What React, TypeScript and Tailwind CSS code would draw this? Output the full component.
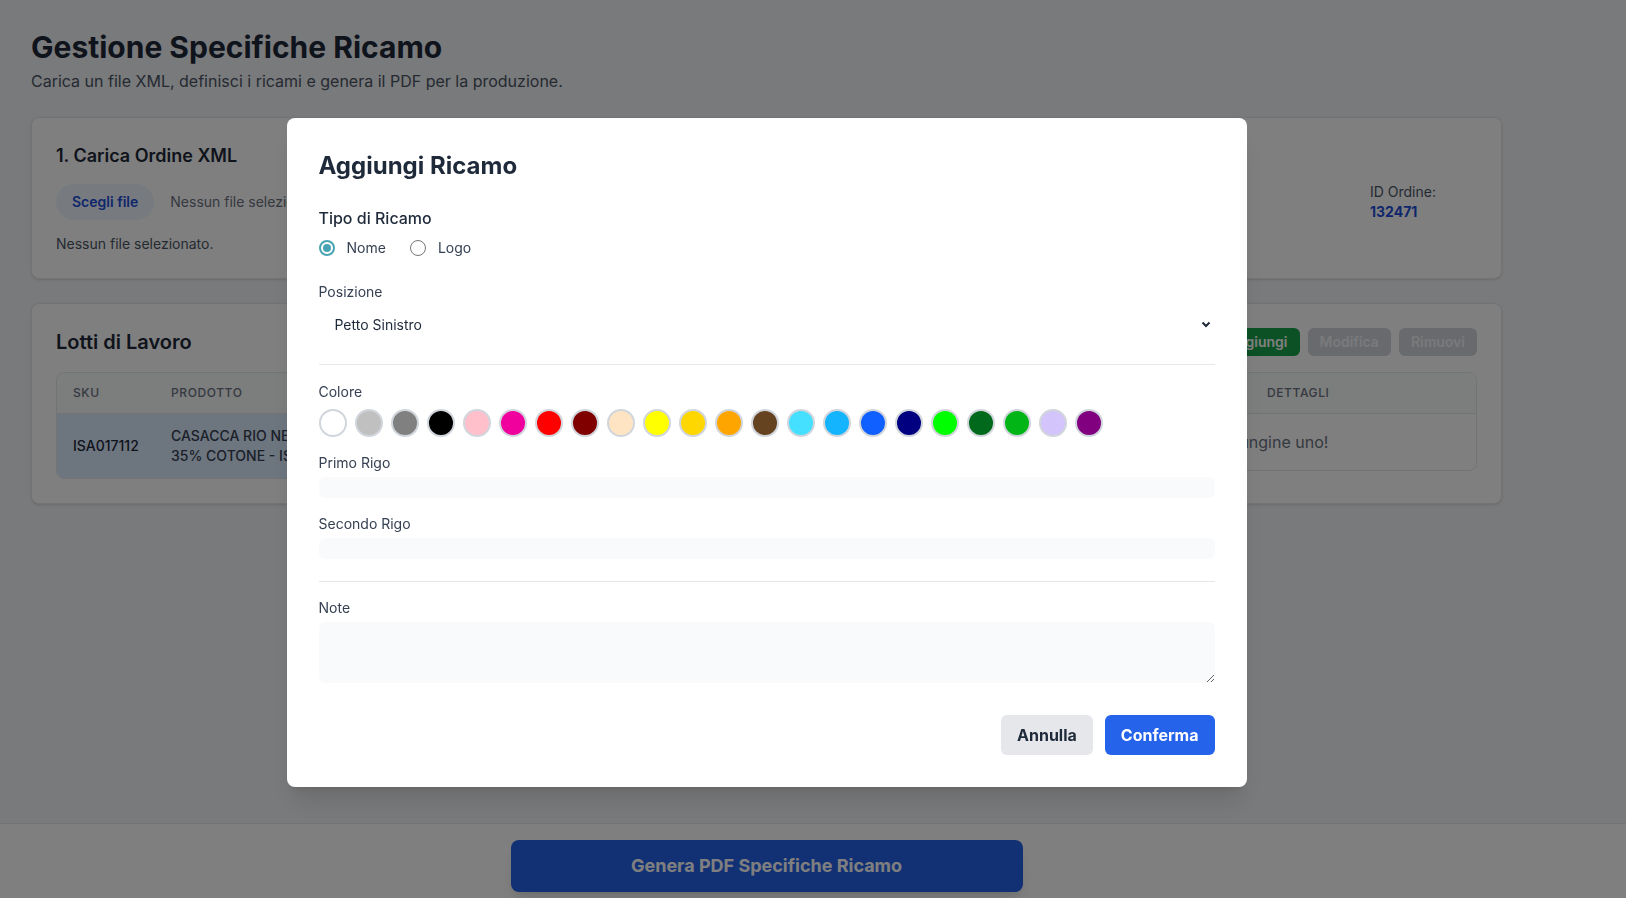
import React from "react";

const COLORS = [
  "#ffffff",
  "#c0c0c0",
  "#808080",
  "#000000",
  "#ffc0cb",
  "#f0009c",
  "#ff0000",
  "#800000",
  "#ffe4c4",
  "#ffff00",
  "#ffd700",
  "#ffa500",
  "#654321",
  "#45e0ff",
  "#14b4ff",
  "#1060ff",
  "#000080",
  "#00ff00",
  "#00691b",
  "#00b515",
  "#d4c4fc",
  "#800080",
];

function Radio({ label, checked }: { label: string; checked?: boolean }) {
  return (
    <label className="flex items-center">
      {checked ? (
        <span className="w-4 h-4 rounded-full border-2 border-[#4aa3b4] flex items-center justify-center">
          <span className="w-2 h-2 rounded-full bg-[#4aa3b4]" />
        </span>
      ) : (
        <span className="w-4 h-4 rounded-full border border-[#767676] bg-white" />
      )}
      <span className="ml-3 text-sm text-gray-700">{label}</span>
    </label>
  );
}

function AddEmbroideryModal() {
  return (
    <div className="fixed inset-0 bg-black/50 flex items-center pt-[6px]">
      <div className="w-[1533px] flex justify-center">
        <div className="w-[960px] bg-white rounded-lg shadow-xl p-8">
          <h2 className="text-2xl font-bold text-gray-800">Aggiungi Ricamo</h2>

          <div className="mt-6">
            <p className="text-base font-medium text-gray-800">Tipo di Ricamo</p>
            <div className="mt-2 flex items-center gap-6 h-5">
              <Radio label="Nome" checked />
              <Radio label="Logo" />
            </div>
          </div>

          <div className="mt-6">
            <p className="text-sm text-gray-700">Posizione</p>
            <div className="mt-1 h-[38px] pl-4 pr-1 flex items-center justify-between bg-white text-sm text-gray-800">
              <span>Petto Sinistro</span>
              <svg width="10" height="7" viewBox="0 0 10 7" fill="none">
                <path d="M1.5 1.5L5 5l3.5-3.5" stroke="#1f2937" strokeWidth="2" />
              </svg>
            </div>
          </div>

          <div className="mt-5 border-t border-gray-200 pt-[17px]">
            <p className="text-sm text-gray-700">Colore</p>
            <div className="mt-[7px] flex gap-2">
              {COLORS.map((c) => (
                <span
                  key={c}
                  className="w-7 h-7 rounded-full border-2 border-gray-300"
                  style={{ backgroundColor: c }}
                />
              ))}
            </div>

            <p className="mt-4 text-sm text-gray-700">Primo Rigo</p>
            <input className="mt-1 block w-full h-[21px] rounded-md bg-gray-50 outline-none" />

            <p className="mt-4 text-sm text-gray-700">Secondo Rigo</p>
            <input className="mt-1 block w-full h-[21px] rounded-md bg-gray-50 outline-none" />
          </div>

          <div className="mt-[22px] border-t border-gray-200 pt-4">
            <p className="text-sm text-gray-700">Note</p>
            <textarea className="mt-1 block w-full h-[61px] rounded-md bg-gray-50 outline-none" />
          </div>

          <div className="mt-8 flex justify-end gap-3">
            <button className="h-10 px-4 rounded-md bg-gray-200 text-gray-800 font-bold">
              Annulla
            </button>
            <button className="h-10 px-4 rounded-md bg-[#2563eb] text-white font-bold">
              Conferma
            </button>
          </div>
        </div>
      </div>
    </div>
  );
}

export default function App() {
  return (
    <div className="h-screen overflow-hidden flex flex-col bg-gray-100 font-[Inter,sans-serif]">
      <main className="flex-1 w-[1533px] px-[31px] pt-[29px]">
        <h1 className="text-3xl font-bold text-gray-800">Gestione Specifiche Ricamo</h1>
        <p className="mt-1 text-gray-600">
          Carica un file XML, definisci i ricami e genera il PDF per la produzione.
        </p>

        <section className="mt-6 bg-white rounded-lg border border-gray-200 shadow-sm p-6 flex items-center">
          <div className="flex-1">
            <h2 className="text-lg font-semibold text-gray-800">1. Carica Ordine XML</h2>
            <div className="mt-3.5 flex items-center">
              <span className="h-9 px-4 rounded-full bg-blue-50 text-[#1d4ed8] text-sm font-semibold flex items-center">
                Scegli file
              </span>
              <span className="ml-4 text-sm text-gray-500">Nessun file selezionato</span>
            </div>
            <p className="mt-3.5 text-sm text-gray-600">Nessun file selezionato.</p>
          </div>
          <div className="w-[107px] pt-2 text-sm">
            <p className="text-gray-600">ID Ordine:</p>
            <p className="font-bold text-[#1d4ed8]">132471</p>
          </div>
        </section>

        <section className="mt-6 bg-white rounded-lg border border-gray-200 shadow-sm p-6">
          <div className="flex items-center justify-between">
            <h2 className="text-xl font-semibold text-gray-800">Lotti di Lavoro</h2>
            <div className="flex gap-2">
              <button className="h-7 px-3 rounded-md bg-[#16a34a] text-white text-sm font-semibold">
                Aggiungi
              </button>
              <button className="h-7 px-3 rounded-md bg-gray-300 text-gray-100 text-sm font-semibold">
                Modifica
              </button>
              <button className="h-7 px-3 rounded-md bg-gray-300 text-gray-100 text-sm font-semibold">
                Rimuovi
              </button>
            </div>
          </div>

          <div className="mt-4 flex items-start gap-4">
            <div className="flex-1 border border-gray-200 rounded-lg overflow-hidden">
              <table className="w-full table-fixed">
                <thead className="bg-gray-50 border-b border-gray-200">
                  <tr className="text-left text-xs text-gray-500 uppercase tracking-wider">
                    <th className="w-[98px] px-4 py-3 font-medium">SKU</th>
                    <th className="px-4 py-3 font-medium">Prodotto</th>
                  </tr>
                </thead>
                <tbody>
                  <tr className="bg-blue-100">
                    <td className="px-4 py-3 text-sm font-medium text-gray-800">ISA017112</td>
                    <td className="px-4 py-3 text-sm font-medium text-gray-700">
                      <span className="block">CASACCA RIO NERO 65% POLIESTERE</span>
                      <span className="block">35% COTONE - ISACCO</span>
                    </td>
                  </tr>
                </tbody>
              </table>
            </div>

            <div className="w-[420px] border border-gray-200 rounded-lg overflow-hidden">
              <div className="bg-gray-50 border-b border-gray-200 pl-[209px] py-3 text-xs font-medium text-gray-500 uppercase tracking-wider">
                Dettagli
              </div>
              <p className="px-6 py-4 whitespace-nowrap text-gray-500">
                Nessun ricamo. Aggiungine uno!
              </p>
            </div>
          </div>
        </section>
      </main>

      <footer className="h-[75px] shrink-0 border-t border-gray-200 bg-white pt-4">
        <div className="w-[1533px] flex justify-center">
          <button className="w-[512px] h-[52px] rounded-lg bg-[#2563eb] text-white text-lg font-bold shadow-lg">
            Genera PDF Specifiche Ricamo
          </button>
        </div>
      </footer>

      <AddEmbroideryModal />
    </div>
  );
}
